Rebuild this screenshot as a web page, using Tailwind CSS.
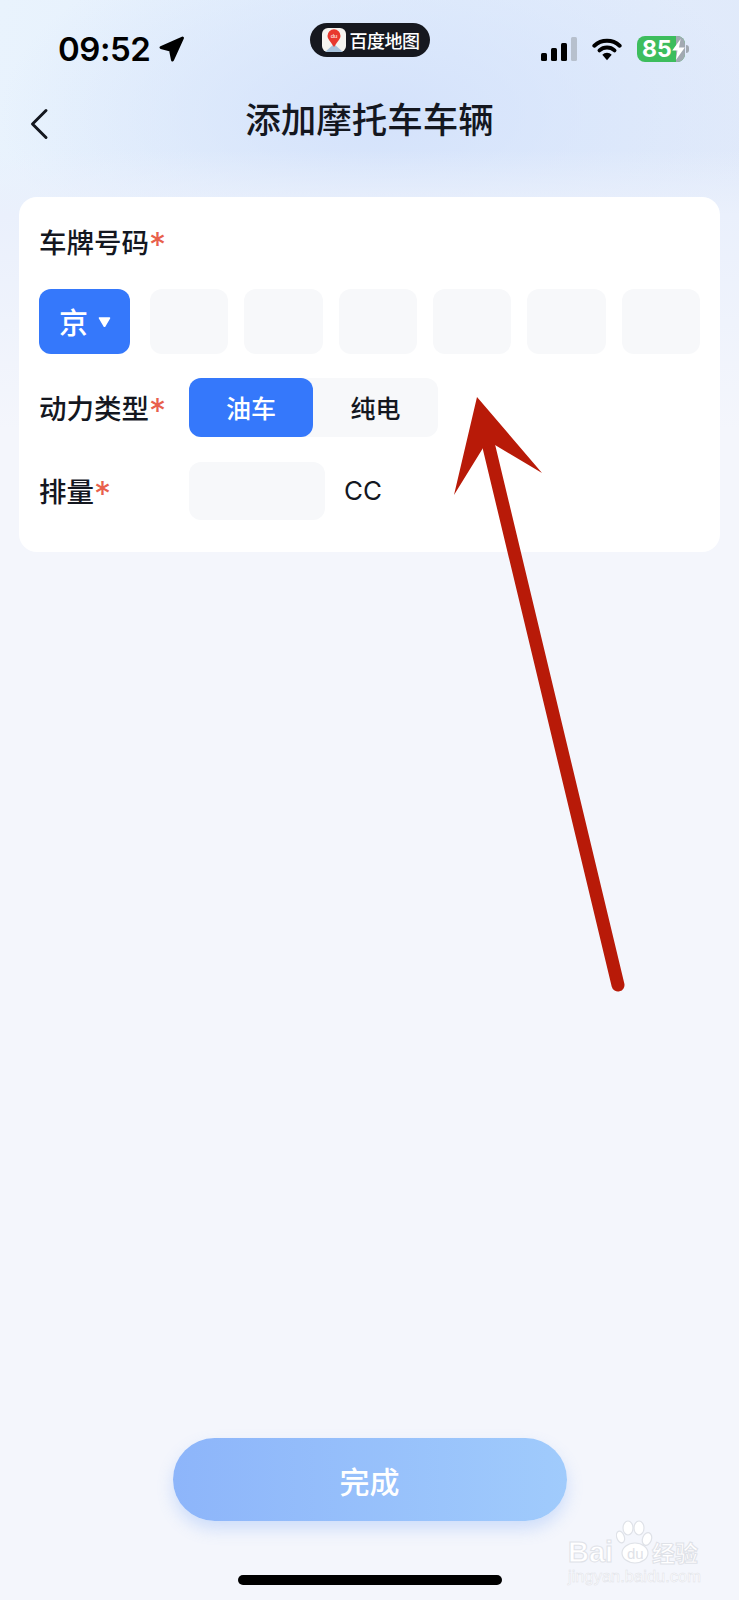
<!DOCTYPE html>
<html lang="zh-CN">
<head>
    <meta charset="UTF-8">
    <meta name="viewport" content="width=device-width, initial-scale=1.0">
    <title>添加摩托车车辆</title>
    <script src="https://cdn.jsdelivr.net/npm/@tailwindcss/browser@4"></script>
</head>
<body class="bg-[#f4f6fc] font-['Noto_Sans_CJK_SC','Noto_Sans',sans-serif] text-[#14171f]">
    <div class="relative w-[739px] h-[1600px] overflow-hidden flex flex-col bg-[linear-gradient(180deg,transparent_0,transparent_150px,#eaf0fc_215px,#f4f6fc_430px),radial-gradient(ellipse_380px_190px_at_380px_115px,#d4e2fb_0%,transparent_100%),linear-gradient(100deg,#e9f3fd_0%,#e2edfc_45%,#dfe7f9_100%)]">

        <!-- Status bar -->
        <div class="h-[90px] pt-[23px] grid grid-cols-[1fr_auto_1fr] items-start">
            <div class="flex items-center h-[52px] pl-[58px] gap-[9px]">
                <span class="font-['Inter',sans-serif] font-semibold text-[33px] leading-none text-black tracking-[-0.5px]">09:52</span>
                <svg width="26" height="26" viewBox="0 0 26 26"><path d="M23.5 2 L2 11.5 L11.5 14 L13.5 24 Z" fill="#000" stroke="#000" stroke-width="3" stroke-linejoin="round"/></svg>
            </div>
            <div class="w-[120px] h-[34px] rounded-full bg-[#16181f] flex items-center pl-[12px] gap-[4px]">
                <svg width="24" height="24" viewBox="0 0 24 24">
                    <rect width="24" height="24" rx="6" fill="#f6f4f0"/>
                    <path d="M3 24 L12 16 L21 24 Z" fill="#a9c3dc"/>
                    <path d="M12 19 C8 13 5.5 11 5.5 7.8 A6.5 6.5 0 0 1 18.5 7.8 C18.5 11 16 13 12 19 Z" fill="#e8392f"/>
                    <text x="12" y="10" text-anchor="middle" font-size="6" fill="#fff" font-family="Liberation Sans">du</text>
                </svg>
                <span class="text-[18px] leading-none font-medium text-white whitespace-nowrap tracking-[-0.5px]">百度地图</span>
            </div>
            <div class="flex items-center justify-end h-[52px] pr-[50px]">
                <svg width="36" height="24" viewBox="0 0 36 24" class="mr-[15px]">
                    <rect x="0" y="16" width="6" height="8" rx="1.5" fill="#000"/>
                    <rect x="10" y="11" width="6" height="13" rx="1.5" fill="#000"/>
                    <rect x="20" y="6" width="6" height="18" rx="1.5" fill="#000"/>
                    <rect x="30" y="0" width="6" height="24" rx="1.5" fill="#b7c0cd"/>
                </svg>
                <svg width="30" height="24" viewBox="0 0 32 24" class="mr-[15px]">
                    <path d="M2.5 8.5 A20 20 0 0 1 29.5 8.5" fill="none" stroke="#000" stroke-width="4.2" stroke-linecap="round"/>
                    <path d="M8 13.5 A12 12 0 0 1 24 13.5" fill="none" stroke="#000" stroke-width="4.2" stroke-linecap="round"/>
                    <path d="M11 18 A7 7 0 0 1 21 18 L16 24 Z" fill="#000"/>
                </svg>
                <div class="relative w-[48px] h-[26px] rounded-[8px] overflow-hidden bg-[#3dbd5d] flex items-center pl-[5px]">
                    <div class="absolute right-0 top-0 bottom-0 w-[9px] bg-[#a2a9b2]"></div>
                    <span class="relative font-['Inter',sans-serif] font-bold text-[23px] leading-none text-white">85</span>
                    <svg width="13" height="21" viewBox="0 0 12 20" class="relative"><path d="M8 0 L0 11 L5 11 L3.5 20 L12 8 L6.5 8 Z" fill="#fff"/></svg>
                </div>
                <div class="w-[3px] h-[8px] ml-[1px] rounded-r-full bg-[#a2a9b2]"></div>
            </div>
        </div>

        <!-- Nav -->
        <div class="relative h-[60px] flex items-center justify-center">
            <svg width="20" height="32" viewBox="0 0 20 32" class="absolute left-[29px] top-[18px]"><path d="M17 2.5 L3.5 16 L17 29.5" fill="none" stroke="#14171f" stroke-width="3" stroke-linecap="round" stroke-linejoin="round"/></svg>
            <h1 class="text-[35.5px] leading-none font-medium text-[#14171f] -translate-y-[2px]">添加摩托车车辆</h1>
        </div>

        <!-- Form card -->
        <div class="mt-[47px] mx-[19px] w-[701px] bg-white rounded-[18px] pt-[25px] pl-[20px] pr-[20px] pb-[32px]">
            <div class="h-[40px] flex items-center text-[27.5px] leading-none font-medium">车牌号码<span class="font-['Inter',sans-serif] font-normal text-[34px] leading-none text-[#e8604c] translate-y-[3px]">*</span></div>

            <div class="mt-[27px] flex h-[65px]">
                <div class="w-[91px] rounded-[12px] bg-[#3578fb] flex items-center pl-[20px] gap-[10px] text-white">
                    <span class="text-[29px] leading-none font-medium">京</span>
                    <svg width="13" height="10" viewBox="0 0 13 10"><path d="M1.5 1 H11.5 L6.5 9.5 Z" fill="#fff" stroke="#fff" stroke-width="1.5" stroke-linejoin="round"/></svg>
                </div>
                <div class="ml-[20px] flex-1 flex gap-[16px]">
                    <div class="flex-1 rounded-[12px] bg-[#f7f8fa]"></div>
                    <div class="flex-1 rounded-[12px] bg-[#f7f8fa]"></div>
                    <div class="flex-1 rounded-[12px] bg-[#f7f8fa]"></div>
                    <div class="flex-1 rounded-[12px] bg-[#f7f8fa]"></div>
                    <div class="flex-1 rounded-[12px] bg-[#f7f8fa]"></div>
                    <div class="flex-1 rounded-[12px] bg-[#f7f8fa]"></div>
                </div>
            </div>

            <div class="mt-[24px] flex items-center h-[59px]">
                <div class="w-[150px] flex items-center text-[27.5px] leading-none font-medium">动力类型<span class="font-['Inter',sans-serif] font-normal text-[34px] leading-none text-[#e8604c] translate-y-[3px]">*</span></div>
                <div class="w-[249px] h-full rounded-[12px] bg-[#f7f8fa] flex text-[25px] leading-none font-medium">
                    <div class="w-[124px] rounded-[12px] bg-[#3578fb] text-white flex items-center justify-center">油车</div>
                    <div class="flex-1 flex items-center justify-center">纯电</div>
                </div>
            </div>

            <div class="mt-[25px] flex items-center h-[58px]">
                <div class="w-[150px] flex items-center text-[27.5px] leading-none font-medium">排量<span class="font-['Inter',sans-serif] font-normal text-[34px] leading-none text-[#e8604c] translate-y-[3px]">*</span></div>
                <div class="w-[136px] h-full rounded-[12px] bg-[#f7f8fa]"></div>
                <span class="ml-[19px] font-['Inter',sans-serif] text-[26px] leading-none">CC</span>
            </div>
        </div>

        <!-- Done button and home bar -->
        <div class="mt-auto flex flex-col items-center">
            <button class="w-[394px] h-[83px] rounded-full bg-[linear-gradient(90deg,#8db5fa,#a0cbfc)] shadow-[0_8px_16px_rgba(120,165,250,0.3)] text-white text-[30px] font-medium leading-none">完成</button>
            <div class="mt-[54px] mb-[15px] w-[264px] h-[10px] rounded-full bg-black"></div>
        </div>

        <!-- Red annotation arrow drawn over the screenshot -->
        <svg class="absolute left-0 top-0 pointer-events-none" width="739" height="1600" viewBox="0 0 739 1600">
            <line x1="489" y1="447" x2="618" y2="985" stroke="#b81a08" stroke-width="13" stroke-linecap="round"/>
            <path d="M477 397 L542 473 L495 445 L483 448 L454 495 Z" fill="#b81a08"/>
        </svg>

        <!-- Baidu jingyan watermark -->
        <div class="absolute left-[566px] top-[1518px] w-[136px] h-[68px] text-white">
            <svg class="absolute left-[50px] top-[2px]" width="40" height="46" viewBox="0 0 40 46">
                <g fill="#fff" stroke="#dfe2e8" stroke-width="1.2">
                    <ellipse cx="4.5" cy="17" rx="3.8" ry="6" transform="rotate(-20 4.5 17)"/>
                    <ellipse cx="12" cy="8" rx="5" ry="7"/>
                    <ellipse cx="23" cy="8" rx="5" ry="7"/>
                    <ellipse cx="31" cy="19" rx="4.5" ry="6.5" transform="rotate(20 31 19)"/>
                    <ellipse cx="19" cy="33" rx="13" ry="10"/>
                </g>
            </svg>
            <span class="absolute left-[2px] top-[17px] text-[29px] leading-[34px] font-['Liberation_Sans',sans-serif] font-bold [-webkit-text-stroke:1px_#dfe2e8]">Bai</span>
            <span class="absolute left-[61px] top-[27px] text-[15px] leading-[18px] font-['Liberation_Sans',sans-serif] text-[#dfe2e8]">du</span>
            <span class="absolute left-[86px] top-[21px] text-[23px] leading-[26px] font-bold [-webkit-text-stroke:1px_#dfe2e8]">经验</span>
            <span class="absolute left-[2px] top-[49px] text-[16.5px] leading-[18px] font-['Liberation_Sans',sans-serif] whitespace-nowrap [-webkit-text-stroke:0.5px_#dfe2e8]">jingyan.baidu.com</span>
        </div>
    </div>
</body>
</html>
